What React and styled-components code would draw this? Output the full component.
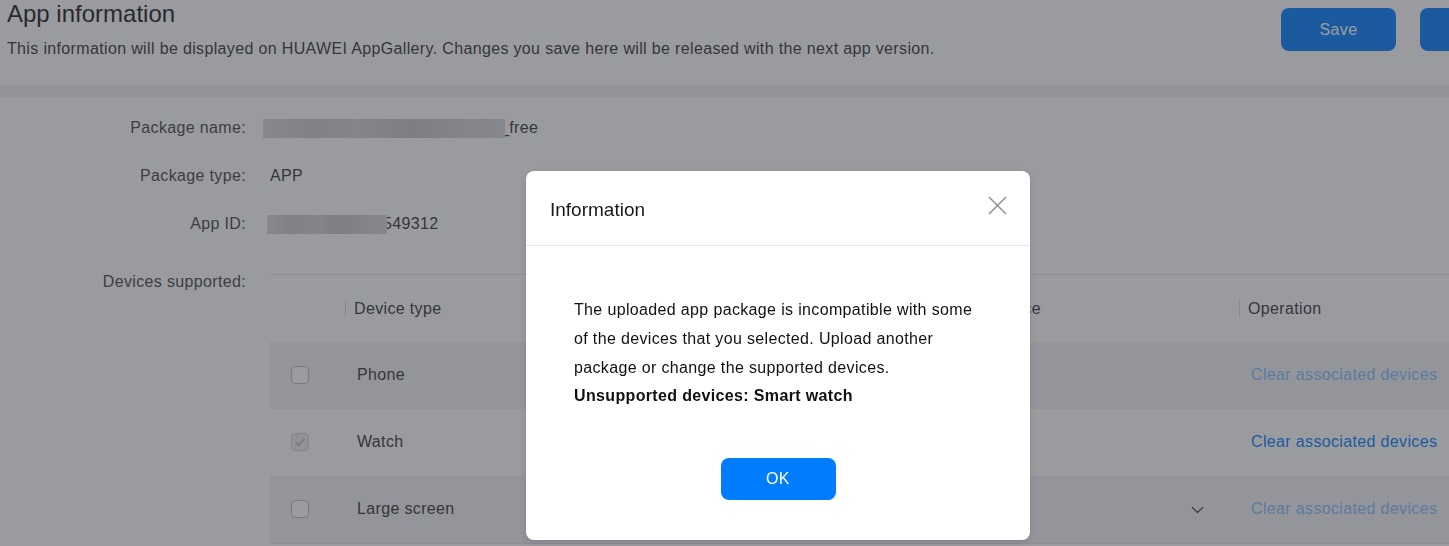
import React from "react";
import styled, { createGlobalStyle } from "styled-components";

const Global = createGlobalStyle`
  html, body { margin: 0; padding: 0; overflow: hidden; background: #f0f0f2; }
  body {
    font-family: "Liberation Sans", Arial, Helvetica, sans-serif;
    color: #333;
    letter-spacing: 0.35px;
  }
  * { box-sizing: border-box; }
`;

const Page = styled.div`
  width: 1560px;
  height: 546px;
  display: flex;
  flex-direction: column;
  gap: 12px;
  background: #f0f0f2;
`;

const HeaderCard = styled.header`
  height: 85px;
  background: #fff;
  display: flex;
  align-items: flex-start;
  justify-content: space-between;
  padding: 0 25px 0 7px;
`;

const TitleBlock = styled.div`
  display: flex;
  flex-direction: column;
`;

const Title = styled.h1`
  margin: 0;
  font-size: 24px;
  line-height: 28px;
  font-weight: 400;
  letter-spacing: 0;
  color: #191919;
`;

const Subtitle = styled.p`
  margin: 9px 0 0;
  font-size: 16px;
  line-height: 24px;
  color: #333;
`;

const Actions = styled.div`
  display: flex;
  gap: 24px;
  padding-top: 8px;
`;

const PrimaryButton = styled.button`
  width: 115px;
  height: 43px;
  border: none;
  border-radius: 8px;
  background: #007dff;
  color: #fff;
  font-family: inherit;
  letter-spacing: inherit;
  font-size: 16px;
  cursor: pointer;
`;

const ContentCard = styled.main`
  flex: 1;
  background: #fff;
  padding-top: 7px;
`;

const InfoRow = styled.div`
  display: grid;
  grid-template-columns: 246px 1fr;
  column-gap: 17px;
  height: 48px;
  align-items: center;
`;

const Label = styled.div`
  text-align: right;
  font-size: 16px;
  line-height: 24px;
  color: #444;
`;

const Value = styled.div`
  display: flex;
  align-items: center;
  font-size: 16px;
  line-height: 24px;
  color: #333;
  padding-left: ${(p) => p.$indent || 0}px;
`;

const Masked = styled.span`
  display: inline-block;
  width: ${(p) => p.$w}px;
  height: 19px;
  margin-right: ${(p) => p.$overlap || 0}px;
  position: relative;
  z-index: 1;
  background: linear-gradient(
    90deg,
    #d9d9dc 0%,
    #cbcbcf 20%,
    #d3d3d6 40%,
    #c6c6ca 60%,
    #d0d0d3 80%,
    #d8d8db 100%
  );
  filter: blur(0.6px);
`;

const DevicesSection = styled.section`
  display: grid;
  grid-template-columns: 246px 1fr;
  column-gap: 24px;
  margin-top: 22px;
`;

const Table = styled.div`
  margin-top: 4px;
  border-top: 1px solid #e4e4e6;
  border-bottom: 1px solid #e4e4e6;
`;

const Row = styled.div`
  display: grid;
  grid-template-columns: 75px 552px 342px 1fr;
  height: 67px;
  align-items: center;
  background: ${(p) => (p.$muted ? "#f2f2f4" : "#fff")};
`;

const HeadCell = styled.div`
  position: relative;
  font-size: 16px;
  color: #333;
  padding-left: ${(p) => (p.$plain ? 0 : 9)}px;
  &::before {
    content: "";
    display: ${(p) => (p.$plain ? "none" : "block")};
    position: absolute;
    left: 0;
    top: 50%;
    width: 1px;
    height: 16px;
    margin-top: -8px;
    background: #dcdcdc;
  }
`;

const Cell = styled.div`
  font-size: 16px;
  color: #333;
  padding-left: 12px;
  display: flex;
  align-items: center;
  margin-top: -1px;
`;

const CheckCell = styled.div`
  padding-left: 21px;
  display: flex;
  align-items: center;
`;

const Checkbox = styled.span`
  width: 18px;
  height: 18px;
  border-radius: 4px;
  border: 1px solid ${(p) => (p.$checked ? "#d4d4d4" : "#bdbdbd")};
  background: ${(p) => (p.$checked ? "#ececec" : "#fff")};
  display: flex;
  align-items: center;
  justify-content: center;
  margin-top: -2px;
`;

const SelectCell = styled.div`
  display: flex;
  justify-content: flex-end;
  padding-right: 35px;
`;

const Link = styled.a`
  font-size: 16px;
  color: ${(p) => (p.$disabled ? "#80bfff" : "#007dff")};
  text-decoration: none;
  cursor: ${(p) => (p.$disabled ? "not-allowed" : "pointer")};
`;

const Mask = styled.div`
  position: fixed;
  inset: 0;
  z-index: 10;
  background: rgba(53, 55, 63, 0.5);
`;

const Dialog = styled.div`
  position: fixed;
  z-index: 11;
  top: 171px;
  left: 526px;
  width: 504px;
  height: 369px;
  background: #fff;
  border-radius: 8px;
  box-shadow: 0 2px 6px rgba(0, 0, 0, 0.12);
  display: flex;
  flex-direction: column;
`;

const DialogHeader = styled.div`
  height: 75px;
  border-bottom: 1px solid #e9e9e9;
  display: flex;
  align-items: center;
  justify-content: space-between;
  padding: 3px 22px 0 24px;
`;

const DialogTitle = styled.h2`
  margin: 0;
  font-size: 19px;
  font-weight: 400;
  letter-spacing: 0;
  color: #191919;
`;

const CloseButton = styled.button`
  border: none;
  background: none;
  padding: 0;
  width: 22px;
  height: 22px;
  display: flex;
  align-items: center;
  justify-content: center;
  margin-top: -9px;
  cursor: pointer;
`;

const DialogBody = styled.div`
  flex: 1;
  padding: 49px 48px 40px;
  display: flex;
  flex-direction: column;
  align-items: center;
`;

const Message = styled.p`
  margin: 0;
  align-self: stretch;
  font-size: 16px;
  line-height: 29px;
  color: #111;
`;

const Strong = styled.strong`
  display: block;
  font-weight: 700;
  line-height: 28px;
`;

const OkButton = styled(PrimaryButton)`
  margin-top: auto;
  height: 42px;
  width: 115px;
`;

const Chevron = () => (
  <svg width="13" height="8" viewBox="0 0 13 8" fill="none">
    <path d="M1 1.2 L6.5 6.5 L12 1.2" stroke="#333" strokeWidth="1.2" />
  </svg>
);

const CheckMark = () => (
  <svg width="12" height="10" viewBox="0 0 12 10" fill="none">
    <path d="M1.5 5 L4.6 8 L10.5 1.8" stroke="#bdbdbd" strokeWidth="1.6" />
  </svg>
);

const devices = [
  { name: "Phone", muted: true, checked: false, disabled: true },
  { name: "Watch", muted: false, checked: true, disabled: false },
  { name: "Large screen", muted: true, checked: false, disabled: true, select: true },
];

export default function App() {
  return (
    <>
      <Global />
      <Page>
        <HeaderCard>
          <TitleBlock>
            <Title>App information</Title>
            <Subtitle>
              This information will be displayed on HUAWEI AppGallery. Changes you save here will be
              released with the next app version.
            </Subtitle>
          </TitleBlock>
          <Actions>
            <PrimaryButton>Save</PrimaryButton>
            <PrimaryButton>Submit</PrimaryButton>
          </Actions>
        </HeaderCard>
        <ContentCard>
          <InfoRow>
            <Label>Package name:</Label>
            <Value>
              <Masked $w={242} $overlap={-5} />
              _free
            </Value>
          </InfoRow>
          <InfoRow>
            <Label>Package type:</Label>
            <Value $indent={7}>APP</Value>
          </InfoRow>
          <InfoRow>
            <Label>App ID:</Label>
            <Value $indent={4}>
              <Masked $w={120} $overlap={-4} />
              549312
            </Value>
          </InfoRow>
          <DevicesSection>
            <Label>Devices supported:</Label>
            <Table>
              <Row>
                <HeadCell $plain />
                <HeadCell>Device type</HeadCell>
                <HeadCell>Associated device</HeadCell>
                <HeadCell>Operation</HeadCell>
              </Row>
              {devices.map((d) => (
                <Row key={d.name} $muted={d.muted}>
                  <CheckCell>
                    <Checkbox $checked={d.checked}>{d.checked && <CheckMark />}</Checkbox>
                  </CheckCell>
                  <Cell>{d.name}</Cell>
                  <SelectCell>{d.select && <Chevron />}</SelectCell>
                  <Cell>
                    <Link $disabled={d.disabled}>Clear associated devices</Link>
                  </Cell>
                </Row>
              ))}
            </Table>
          </DevicesSection>
        </ContentCard>
      </Page>
      <Mask />
      <Dialog>
        <DialogHeader>
          <DialogTitle>Information</DialogTitle>
          <CloseButton aria-label="Close">
            <svg width="19" height="19" viewBox="0 0 19 19" fill="none">
              <path d="M1 1 L18 18 M18 1 L1 18" stroke="#8f8f8f" strokeWidth="1.5" />
            </svg>
          </CloseButton>
        </DialogHeader>
        <DialogBody>
          <Message>
            The uploaded app package is incompatible with some of the devices that you selected.
            Upload another package or change the supported devices.
            <Strong>Unsupported devices: Smart watch</Strong>
          </Message>
          <OkButton>OK</OkButton>
        </DialogBody>
      </Dialog>
    </>
  );
}
